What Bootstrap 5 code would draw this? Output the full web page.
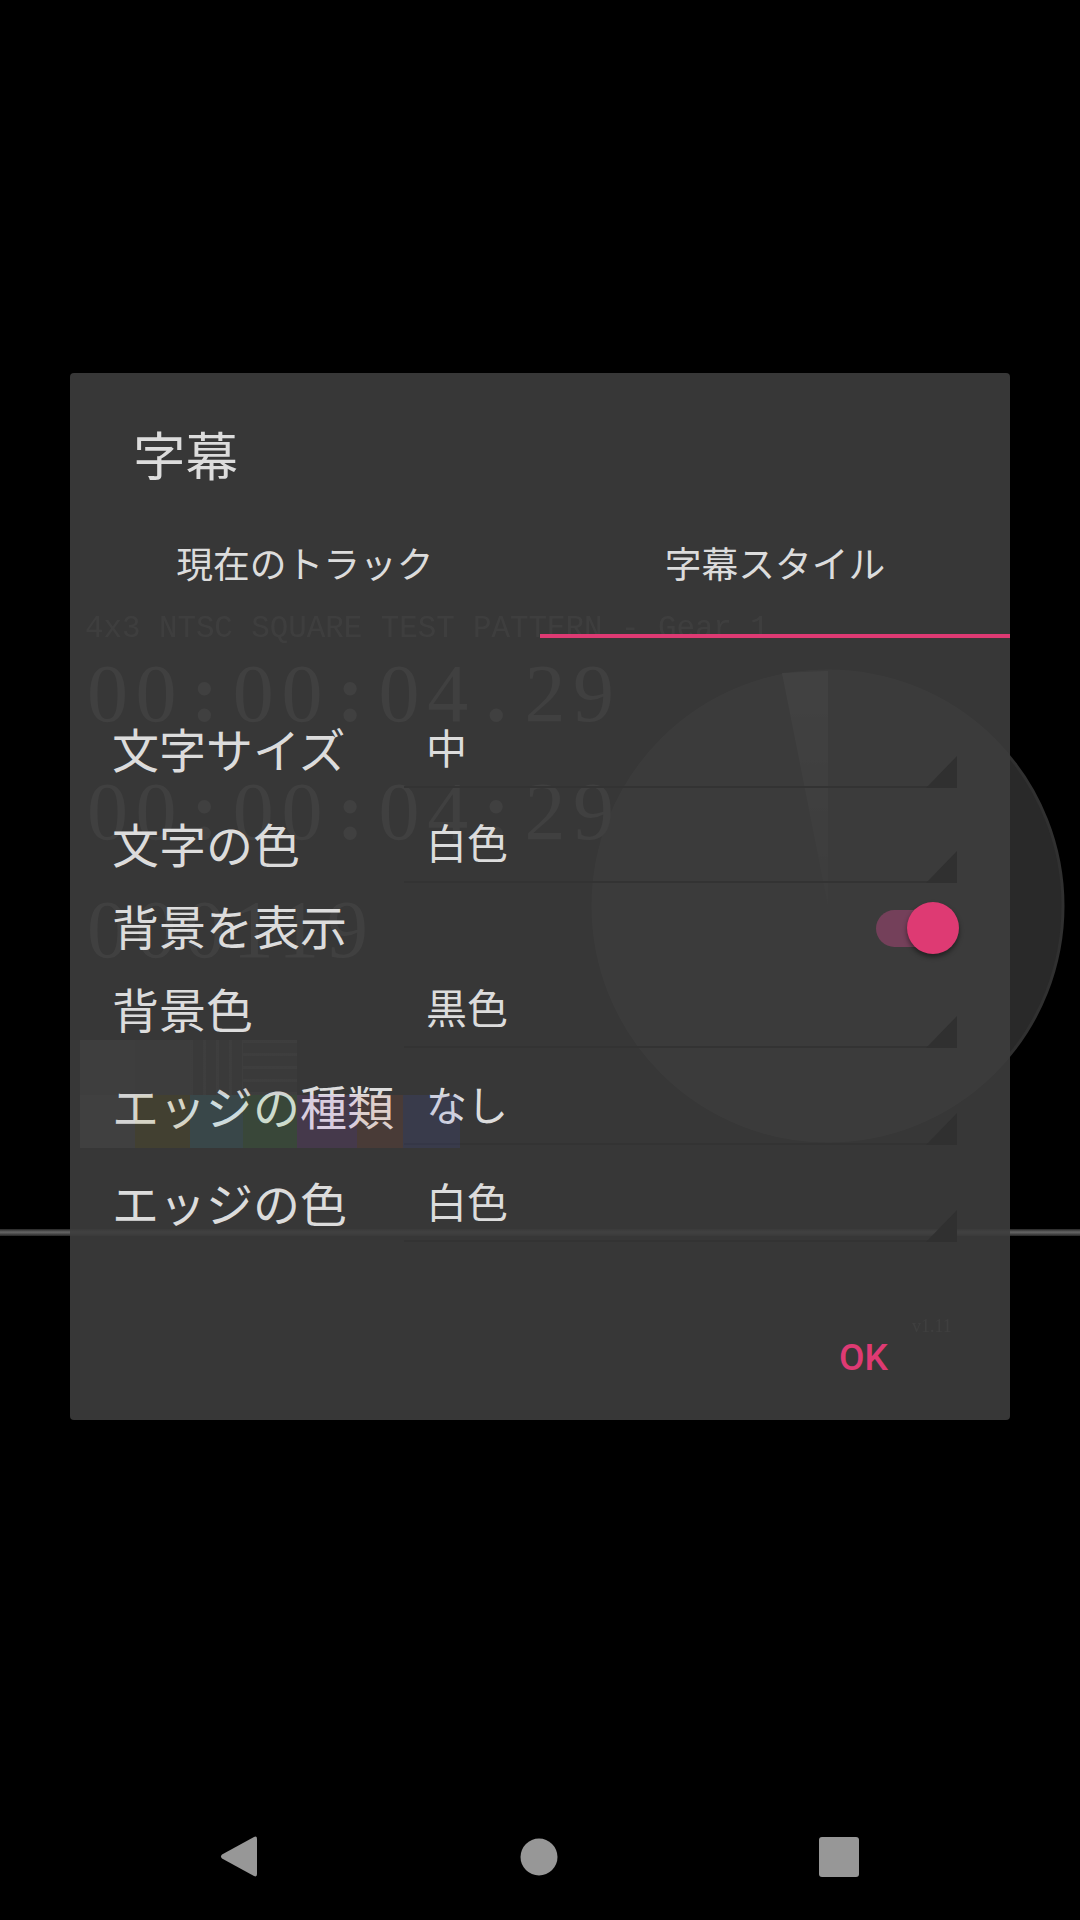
<!doctype html>
<html lang="ja">
<head>
<meta charset="utf-8">
<title>字幕</title>
<link rel="stylesheet" href="https://cdn.jsdelivr.net/npm/bootstrap@5.3.0/dist/css/bootstrap.min.css">
<style>
html,body{background:#000;margin:0;width:1080px;height:1920px;overflow:hidden}
body{font-family:"Noto Sans CJK JP","Noto Sans",sans-serif;color:#dcdcdc}
.screen{position:relative;width:1080px;height:1920px;background:#000}
.video{position:absolute;inset:0}
.video svg{position:absolute;left:0;top:0}
.ghost{position:absolute;font-family:"Liberation Serif",serif;color:#5a5a5a;white-space:pre;line-height:1;filter:blur(.7px);letter-spacing:7.6px}
.gsep{display:inline-block;width:41px;text-align:center;font-weight:700;letter-spacing:0;margin-right:7.6px}
.g1{font-family:"Liberation Mono",monospace;letter-spacing:0;left:85px;top:614px;font-size:30.8px;color:#4c4c4c}
.g2{left:87px;top:653px;font-size:82px}
.g3{left:87px;top:771px;font-size:82px}
.g4{left:87px;top:889px;font-size:82px;letter-spacing:7.6px;color:#5e5e5e}
.g5{left:912px;top:1317px;font-size:18px;letter-spacing:0;color:#505050}
.scanline{position:absolute;left:0;right:0;top:1229px;height:7px;background:linear-gradient(#262626,#666 45%,#565656 60%,#262626)}
.shell{position:relative;height:1920px;padding-top:373px}
.dlg{width:940px;height:1047px;margin-left:70px;background:rgba(61,61,61,.9);border:0;border-radius:4px;color:#dcdcdc}
.dlg-title{font-size:52.5px;line-height:1;padding:54px 0 0 63px;margin:0;font-weight:400}
.tabs{margin-top:43px;height:115px;flex-wrap:nowrap}
.tab-cell{flex:0 0 470px;font-size:36.75px;line-height:1;padding-top:21px;text-align:center;color:#dcdcdc;border-bottom:4px solid transparent}
.tab-cell.is-on{border-bottom-color:#de3a73}
.fields{padding:77px 53px 0 42px}
.field{height:73px;margin-bottom:22px}
.field.short{height:47px;margin-bottom:23px}
.field.wide{margin-bottom:24px}
.lab{flex:0 0 292px;font-size:47px;line-height:1;white-space:nowrap;padding-bottom:7px}
.spin{flex:1 1 auto;position:relative;height:100%;padding:0 0 7px 22px;font-size:41px;line-height:1;border-bottom:2px solid #333}
.tri{position:absolute;right:0;bottom:-2px;width:31px;height:32px}
.switch-box{position:relative;width:83px;height:52px;margin-right:-2px;margin-left:auto}
.switch-track{position:absolute;left:0;top:8px;width:74px;height:37px;border-radius:19px;background:#74405a}
.switch-knob{position:absolute;right:0;top:0;width:52px;height:52px;border-radius:50%;background:#de3a73;box-shadow:0 3px 5px rgba(0,0,0,.45)}
.ok-btn{position:absolute;left:839px;top:1340px;font-family:Roboto,sans-serif;font-weight:500;font-size:37px;line-height:36px;color:#de3a73;background:none;border:0;padding:0}
.tint{position:absolute;left:80px;top:1040px;width:380px;height:108px;pointer-events:none;filter:blur(.5px)}
.tint-row{height:55px}
.tint-row.low{height:53px}
.tc{height:100%;opacity:.1}
.w55{width:55px}.w53{width:53px}.w54{width:54px}.w60{width:60px}.w46{width:46px}.w57{width:57px}
.gray1{background:#808080}.gray2{background:#747474}
.vst{background:repeating-linear-gradient(90deg,#808080 0 3px,#5a5a5a 3px 13px)}
.hst{background:repeating-linear-gradient(180deg,#808080 0 3px,#5a5a5a 3px 13px)}
.c1{background:#989898}.c2{background:#a89400}.c3{background:#4edaee}.c4{background:#4eda4e}.c5{background:#c64eff}.c6{background:#ee623a}.c7{background:#4e62ff}
.sysbar{position:absolute;left:0;right:0;bottom:0;height:126px;padding:0 3px 1px 0}
.syscell{width:300px}
</style>
</head>
<body>
<div class="screen">
  <div class="video">
    <svg width="1080" height="1920" viewBox="0 0 1080 1920">
      <defs><linearGradient id="sec" x1="0" y1="0" x2="0" y2="1"><stop offset="0" stop-color="#6c6c6c"/><stop offset="1" stop-color="#3a3a3a"/></linearGradient></defs>
      <circle cx="828" cy="906" r="235" fill="#292929" stroke="#303030" stroke-width="3"/>
      <polygon points="782,673 828,671 828,906" fill="url(#sec)"/>
    </svg>
    <div class="scanline"></div>
    <div class="ghost g1">4x3 NTSC SQUARE TEST PATTERN - Gear 1</div>
    <div class="ghost g2">00<span class="gsep">:</span>00<span class="gsep">:</span>04<span class="gsep">.</span>29</div>
    <div class="ghost g3">00<span class="gsep">:</span>00<span class="gsep">:</span>04<span class="gsep">:</span>29</div>
    <div class="ghost g4">000119</div>
    <div class="ghost g5">v1.11</div>
  </div>

  <div class="shell">
    <div class="card dlg">
      <h1 class="dlg-title">字幕</h1>
      <div class="nav tabs">
        <div class="tab-cell">現在のトラック</div>
        <div class="tab-cell is-on">字幕スタイル</div>
      </div>
      <div class="fields">
        <div class="field d-flex align-items-center"><div class="lab">文字サイズ</div><div class="spin d-flex align-items-center">中<svg class="tri" viewBox="0 0 31 32"><polygon points="0,32 31,0 31,32" fill="#303030"/></svg></div></div>
        <div class="field d-flex align-items-center"><div class="lab">文字の色</div><div class="spin d-flex align-items-center">白色<svg class="tri" viewBox="0 0 31 32"><polygon points="0,32 31,0 31,32" fill="#303030"/></svg></div></div>
        <div class="field short d-flex align-items-center"><div class="lab">背景を表示</div><div class="switch-box"><span class="switch-track"></span><span class="switch-knob"></span></div></div>
        <div class="field wide d-flex align-items-center"><div class="lab">背景色</div><div class="spin d-flex align-items-center">黒色<svg class="tri" viewBox="0 0 31 32"><polygon points="0,32 31,0 31,32" fill="#303030"/></svg></div></div>
        <div class="field wide d-flex align-items-center"><div class="lab">エッジの種類</div><div class="spin d-flex align-items-center">なし<svg class="tri" viewBox="0 0 31 32"><polygon points="0,32 31,0 31,32" fill="#303030"/></svg></div></div>
        <div class="field d-flex align-items-center"><div class="lab">エッジの色</div><div class="spin d-flex align-items-center">白色<svg class="tri" viewBox="0 0 31 32"><polygon points="0,32 31,0 31,32" fill="#303030"/></svg></div></div>
      </div>
    </div>
  </div>
  <button type="button" class="ok-btn">OK</button>

  <div class="tint">
    <div class="tint-row d-flex"><div class="tc w55 gray1"></div><div class="tc w55 gray2"></div><div class="tc w53 vst"></div><div class="tc w54 hst"></div></div>
    <div class="tint-row low d-flex"><div class="tc w55 c1"></div><div class="tc w55 c2"></div><div class="tc w53 c3"></div><div class="tc w54 c4"></div><div class="tc w60 c5"></div><div class="tc w46 c6"></div><div class="tc w57 c7"></div></div>
  </div>

  <div class="sysbar d-flex justify-content-center align-items-center">
    <div class="syscell d-flex justify-content-center"><svg width="38" height="43" viewBox="0 0 38 43"><path d="M34 2 L2 19.500 Q0 21.500 2 23.500 L34 41 Q37 42.500 37 39 L37 4 Q37 0.500 34 2Z" fill="#979797"/></svg></div>
    <div class="syscell d-flex justify-content-center"><svg width="38" height="38" viewBox="0 0 38 38"><circle cx="19" cy="19" r="18.500" fill="#979797"/></svg></div>
    <div class="syscell d-flex justify-content-center"><svg width="40" height="40" viewBox="0 0 40 40"><rect width="40" height="40" rx="3" fill="#979797"/></svg></div>
  </div>
</div>
</body>
</html>
